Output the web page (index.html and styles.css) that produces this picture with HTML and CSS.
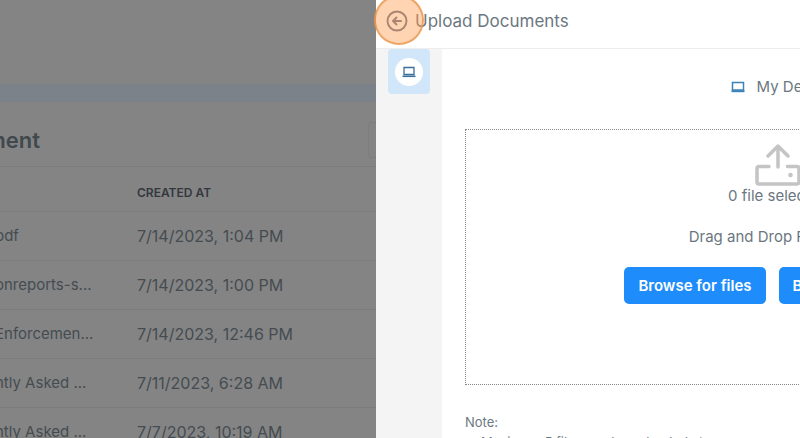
FILE: index.html
```html
<!DOCTYPE html>
<html lang="en">
<head>
<meta charset="utf-8">
<title>Upload Documents</title>
<link rel="stylesheet" href="styles.css">
</head>
<body>
<div class="shell">
  <main class="page">
    <div class="topbar"></div>
    <div class="band"></div>
    <div class="title-row">
      <h1>ment</h1>
      <button class="ghost" type="button" aria-label="Filter"></button>
    </div>
    <table>
      <thead>
        <tr><th class="name" aria-label="Name"></th><th>CREATED AT</th></tr>
      </thead>
      <tbody>
        <tr><td>pdf</td><td>7/14/2023, 1:04 PM</td></tr>
        <tr><td>onreports-s...</td><td>7/14/2023, 1:00 PM</td></tr>
        <tr><td>Enforcemen...</td><td>7/14/2023, 12:46 PM</td></tr>
        <tr><td>ntly Asked ...</td><td>7/11/2023, 6:28 AM</td></tr>
        <tr><td>ntly Asked ...</td><td>7/7/2023, 10:19 AM</td></tr>
      </tbody>
    </table>
  </main>
  <section class="drawer">
    <header class="drawer-head">
      <button class="back" type="button" aria-label="Back">
        <svg width="22" height="22" viewBox="0 0 22 22" fill="none" stroke="#65708a" stroke-width="1.9" stroke-linecap="round" stroke-linejoin="round"><circle cx="11" cy="11" r="9.5"/><path d="M15 11H7.5M10.500 7.500L7 11l3.500 3.500"/></svg>
        <span class="pulse"></span>
      </button>
      <h2>Upload Documents</h2>
    </header>
    <div class="drawer-body">
      <nav class="rail">
        <button class="source" type="button" aria-label="My Device">
          <span class="disc">
            <svg width="14" height="12" viewBox="0 0 14 12" fill="none" stroke="#3b6f9d"><path d="M2 1.500h10v7H2z" stroke-width="1.300"/><path d="M0.500 10.300h13" stroke-width="1.600"/></svg>
          </span>
        </button>
      </nav>
      <div class="content">
        <div class="device">
          <svg width="14" height="12" viewBox="0 0 14 12" fill="none" stroke="#3b82b8"><path d="M1.500 1.500h11v7.500h-11z" stroke-width="1.500"/><path d="M0.500 10.200h13" stroke-width="2"/></svg>
          <span>My Device</span>
        </div>
        <div class="dropzone">
          <svg width="46" height="42" viewBox="0 0 46 42" fill="none" stroke="#c4c4c4" stroke-width="3.500" stroke-linecap="round" stroke-linejoin="round"><path d="M14 22.500H4a2 2 0 0 0-2 2V38a2 2 0 0 0 2 2h38a2 2 0 0 0 2-2V24.500a2 2 0 0 0-2-2H32.500"/><path d="M23 23V2M13 12L23 2l10 10"/><circle cx="35.500" cy="31" r="2.300" fill="#c4c4c4" stroke="none"/></svg>
          <p class="count">0 file selected</p>
          <p class="hint">Drag and Drop Files Here</p>
          <div class="actions">
            <button class="primary" type="button">Browse for files</button>
            <button class="primary" type="button">Browse for folder</button>
          </div>
        </div>
        <div class="note">
          <p>Note:</p>
          <ul><li>Maximum 5 files can be uploaded at once</li></ul>
        </div>
      </div>
    </div>
  </section>
</div>
</body>
</html>
```
FILE: styles.css
```css
* { box-sizing: border-box; }

body {
  margin: 0;
  height: 100vh;
  overflow: hidden;
  font-family: Inter, "Liberation Sans", sans-serif;
  font-size: 15px;
  line-height: 20px;
  color: #6b7780;
  background: #fff;
}

h1, h2, p, ul { margin: 0; padding: 0; }
button { font: inherit; border: 0; padding: 0; background: none; }

.shell {
  display: grid;
  grid-template-columns: 47% minmax(738px, 1fr);
  height: 100%;
}

.page {
  overflow: hidden;
  background: #848484;
  color: #454c51;
}
.topbar { height: 84px; }
.band { height: 18px; background: #7b8289; }
.title-row {
  display: flex;
  align-items: center;
  justify-content: space-between;
  height: 64px;
  padding-top: 12px;
}
h1 {
  margin-left: -14px;
  font-size: 22px;
  font-weight: 600;
  line-height: 28px;
  color: #40494d;
}
.ghost {
  width: 8px;
  height: 36px;
  border: 1px solid #7d7d7d;
  border-right: 0;
  border-radius: 4px 0 0 4px;
}

table {
  width: 100%;
  border-collapse: collapse;
  table-layout: fixed;
  border-top: 1px solid #7b7c7d;
}
th, td {
  height: 49px;
  padding: 0;
  border-bottom: 1px solid #7b7c7d;
  text-align: left;
  white-space: nowrap;
}
th {
  height: 45px;
  padding-top: 8px;
  font-size: 12px;
  font-weight: 600;
  color: #35373f;
}
.name { width: 137px; }
td { font-size: 16px; }
td:first-child {
  font-size: 15px;
  text-indent: -5px;
}

.drawer {
  display: flex;
  flex-direction: column;
  background: #fff;
}
.drawer-head {
  display: flex;
  align-items: center;
  gap: 7px;
  height: 49px;
  padding: 0 10px 6px;
  border-bottom: 1px solid #ededed;
}
.back {
  position: relative;
  display: flex;
}
.pulse {
  position: absolute;
  top: -15px;
  left: -12px;
  width: 50px;
  height: 50px;
  border: 2px solid rgba(232, 150, 75, 0.75);
  border-radius: 50%;
  background: rgba(255, 160, 85, 0.45);
}
h2 {
  font-size: 17px;
  font-weight: 400;
  line-height: 24px;
}

.drawer-body {
  display: flex;
  flex: 1;
}
.rail {
  flex: none;
  width: 66px;
  padding: 0 12px;
  background: #f4f4f4;
}
.source {
  display: flex;
  align-items: center;
  justify-content: center;
  width: 100%;
  height: 45px;
  border-radius: 4px;
  background: #d2e6f9;
}
.disc {
  display: flex;
  align-items: center;
  justify-content: center;
  width: 28px;
  height: 28px;
  border-radius: 50%;
  background: #fff;
}

.content {
  flex: 1;
  padding: 28px 23px 0;
}
.device {
  display: flex;
  align-items: center;
  justify-content: center;
  gap: 12px;
  padding-left: 6px;
}
.dropzone {
  display: flex;
  flex-direction: column;
  align-items: center;
  height: 256px;
  margin-top: 32px;
  padding-top: 14px;
  border: 1px dotted #888;
}
.hint { margin-top: 21px; }
.actions {
  display: flex;
  gap: 13px;
  margin-top: 20px;
}
.primary {
  height: 37px;
  padding: 0 14px;
  border-radius: 5px;
  background: #1e8cfa;
  color: #fff;
  font-weight: 600;
}

.note {
  margin-top: 27px;
  font-size: 13px;
}
.note ul { padding-left: 16px; list-style: none; }
```
